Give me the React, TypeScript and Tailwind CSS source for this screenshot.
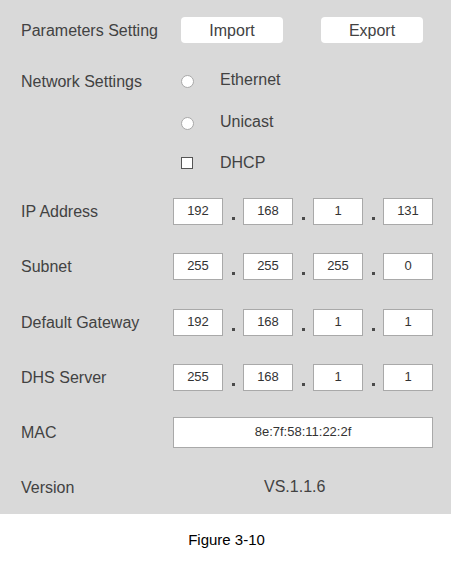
import React from 'react';

const Dot = () => (
    <div className="w-[20px] h-full flex items-end justify-center pb-[5px]">
        <span className="w-[3px] h-[3px] bg-[#4a4a4a]" />
    </div>
);

const IpRow = ({ label, parts, height }: { label: string; parts: string[]; height: string }) => (
    <div className={`flex items-center ${height}`}>
        <div className="w-[152px] pt-[2px]">{label}</div>
        <div className="flex items-stretch h-[27px]">
            {parts.map((p, i) => (
                <React.Fragment key={i}>
                    {i > 0 && <Dot />}
                    <div className="w-[50px] bg-white border border-[#a9a9a9] flex items-center justify-center text-[13px] text-[#333]">
                        {p}
                    </div>
                </React.Fragment>
            ))}
        </div>
    </div>
);

const Radio = () => (
    <span className="w-[13px] h-[13px] rounded-full bg-white border border-[#a8a8a8] mt-[2px]" />
);

const App = () => {
    return (
        <div className="w-[451px] h-[561px] bg-white text-[16px] text-[#424242]" style={{ fontFamily: '"Liberation Sans", Arial, sans-serif' }}>
            <div className="bg-[#d9d9d9] pt-[4px] pl-[21px] h-[514px]">
                <div className="flex items-center h-[52px]">
                    <div className="w-[160px] pt-[2px]">Parameters Setting</div>
                    <button className="w-[102px] h-[26px] bg-white rounded-[4px] text-[#424242] pt-[1px]">Import</button>
                    <button className="w-[102px] h-[26px] bg-white rounded-[4px] text-[#424242] pt-[1px] ml-[38px]">Export</button>
                </div>
                <div className="flex items-center h-[48px]">
                    <div className="w-[160px] mt-[3px]">Network Settings</div>
                    <Radio />
                    <span className="ml-[26px]">Ethernet</span>
                </div>
                <div className="flex items-center h-[36px]">
                    <div className="w-[160px]" />
                    <Radio />
                    <span className="ml-[26px]">Unicast</span>
                </div>
                <div className="flex items-center h-[44px]">
                    <div className="w-[160px]" />
                    <span className="w-[12px] h-[12px] bg-white border border-[#555] mt-[1px]" />
                    <span className="ml-[27px] pt-[1px]">DHCP</span>
                </div>
                <IpRow label="IP Address" parts={['192', '168', '1', '131']} height="h-[54px]" />
                <IpRow label="Subnet" parts={['255', '255', '255', '0']} height="h-[56px]" />
                <IpRow label="Default Gateway" parts={['192', '168', '1', '1']} height="h-[56px]" />
                <IpRow label="DHS Server" parts={['255', '168', '1', '1']} height="h-[54px]" />
                <div className="flex items-center h-[56px]">
                    <div className="w-[152px] pt-[2px]">MAC</div>
                    <div className="w-[260px] h-[31px] bg-white border border-[#a9a9a9] flex items-center justify-center text-[13px] text-[#333]">
                        8e:7f:58:11:22:2f
                    </div>
                </div>
                <div className="flex items-center h-[54px]">
                    <div className="w-[152px] pt-[2px]">Version</div>
                    <div className="pl-[91px]">VS.1.1.6</div>
                </div>
            </div>
            <div className="h-[52px] flex items-center justify-center text-[15px] text-black pl-[2px]">
                Figure 3-10
            </div>
        </div>
    );
};

export default App;
